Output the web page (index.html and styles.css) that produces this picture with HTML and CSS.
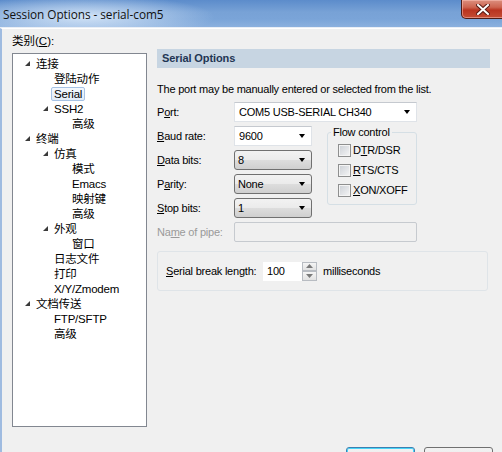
FILE: index.html
```html
<!DOCTYPE html>
<html>
<head>
<meta charset="utf-8">
<link rel="stylesheet" href="styles.css">
</head>
<body>
<div class="window">
  <div class="titlebar">
    <span class="title">Session Options - serial-com5</span>
    <div class="close">
      <svg width="14" height="11" viewBox="0 0 14 11"><path d="M2 1 L12 10 M12 1 L2 10" stroke="#5a1a14" stroke-width="4" stroke-linecap="square"/><path d="M2 1 L12 10 M12 1 L2 10" stroke="#ffffff" stroke-width="2" stroke-linecap="square"/></svg>
    </div>
  </div>
  <div class="client">
    <div class="columns">
      <div class="left">
        <div class="cat-label">类别(<u>C</u>):</div>
        <div class="tree">
          <div class="node l0"><span class="tog"><svg width="5" height="5" viewBox="0 0 5 5"><polygon points="5,0 5,5 0,5" fill="#3a3a3a"/></svg></span><span class="txt">连接</span></div>
          <div class="node l1"><span class="tog"></span><span class="txt">登陆动作</span></div>
          <div class="node l1"><span class="tog"></span><span class="txt sel">Serial</span></div>
          <div class="node l1"><span class="tog"><svg width="5" height="5" viewBox="0 0 5 5"><polygon points="5,0 5,5 0,5" fill="#3a3a3a"/></svg></span><span class="txt">SSH2</span></div>
          <div class="node l2"><span class="tog"></span><span class="txt">高级</span></div>
          <div class="node l0"><span class="tog"><svg width="5" height="5" viewBox="0 0 5 5"><polygon points="5,0 5,5 0,5" fill="#3a3a3a"/></svg></span><span class="txt">终端</span></div>
          <div class="node l1"><span class="tog"><svg width="5" height="5" viewBox="0 0 5 5"><polygon points="5,0 5,5 0,5" fill="#3a3a3a"/></svg></span><span class="txt">仿真</span></div>
          <div class="node l2"><span class="tog"></span><span class="txt">模式</span></div>
          <div class="node l2"><span class="tog"></span><span class="txt">Emacs</span></div>
          <div class="node l2"><span class="tog"></span><span class="txt">映射键</span></div>
          <div class="node l2"><span class="tog"></span><span class="txt">高级</span></div>
          <div class="node l1"><span class="tog"><svg width="5" height="5" viewBox="0 0 5 5"><polygon points="5,0 5,5 0,5" fill="#3a3a3a"/></svg></span><span class="txt">外观</span></div>
          <div class="node l2"><span class="tog"></span><span class="txt">窗口</span></div>
          <div class="node l1"><span class="tog"></span><span class="txt">日志文件</span></div>
          <div class="node l1"><span class="tog"></span><span class="txt">打印</span></div>
          <div class="node l1"><span class="tog"></span><span class="txt">X/Y/Zmodem</span></div>
          <div class="node l0"><span class="tog"><svg width="5" height="5" viewBox="0 0 5 5"><polygon points="5,0 5,5 0,5" fill="#3a3a3a"/></svg></span><span class="txt">文档传送</span></div>
          <div class="node l1"><span class="tog"></span><span class="txt">FTP/SFTP</span></div>
          <div class="node l1"><span class="tog"></span><span class="txt">高级</span></div>
        </div>
      </div>
      <div class="right">
        <div class="header">Serial Options</div>
        <p class="desc">The port may be manually entered or selected from the list.</p>
        <div class="form">
          <label class="lbl r1">P<u>o</u>rt:</label>
          <div class="combo edit wide r1"><span class="val">COM5 USB-SERIAL CH340</span><span class="arrow"></span></div>

          <label class="lbl r2"><u>B</u>aud rate:</label>
          <div class="combo edit r2"><span class="val">9600</span><span class="arrow"></span></div>

          <label class="lbl r3"><u>D</u>ata bits:</label>
          <div class="combo btn r3"><span class="val">8</span><span class="arrow"></span></div>

          <label class="lbl r4">P<u>a</u>rity:</label>
          <div class="combo btn r4"><span class="val">None</span><span class="arrow"></span></div>

          <label class="lbl r5"><u>S</u>top bits:</label>
          <div class="combo btn r5"><span class="val">1</span><span class="arrow"></span></div>

          <fieldset class="flow">
            <legend>Flow control</legend>
            <div class="chk"><span class="box"></span><span>D<u>T</u>R/DSR</span></div>
            <div class="chk"><span class="box"></span><span><u>R</u>TS/CTS</span></div>
            <div class="chk"><span class="box"></span><span><u>X</u>ON/XOFF</span></div>
          </fieldset>

          <label class="lbl dis r6">Na<u>m</u>e of pipe:</label>
          <div class="pipe wide r6"></div>
        </div>
        <div class="break-group">
          <span class="blbl"><u>S</u>erial break length:</span>
          <div class="spin">
            <span class="spin-val">100</span>
            <span class="spin-btns">
              <span class="sb"><svg width="7" height="4" viewBox="0 0 7 4"><polygon points="0,4 7,4 3.5,0" fill="#7a7a7a"/></svg></span>
              <span class="sb"><svg width="7" height="4" viewBox="0 0 7 4"><polygon points="0,0 7,0 3.5,4" fill="#7a7a7a"/></svg></span>
            </span>
          </div>
          <span class="ms">milliseconds</span>
        </div>
      </div>
    </div>
    <div class="footer">
      <div class="pbtn default"></div>
      <div class="pbtn"></div>
    </div>
  </div>
</div>
</body>
</html>
```
FILE: styles.css
```css
* { box-sizing: border-box; }
html, body { margin: 0; padding: 0; }
body {
  width: 502px;
  height: 452px;
  overflow: hidden;
  background: #f0f0f0;
  font-family: "Liberation Sans", "Noto Sans CJK SC", sans-serif;
  font-size: 11px;
  letter-spacing: -0.22px;
  color: #000;
}
.window { width: 502px; height: 452px; display: flex; flex-direction: column; }

.titlebar {
  height: 28px;
  flex: none;
  display: flex;
  align-items: flex-start;
  justify-content: space-between;
  background:
    radial-gradient(ellipse 130px 22px at 85px 17px, rgba(214,230,248,0.95), rgba(214,230,248,0) 100%),
    linear-gradient(180deg, #5c8ccb 0%, #78a2d6 45%, #7aa4d8 70%, #8bb0de 100%);
  border-bottom: 1px solid #e9eef5;
}
.title {
  font-family: "Open Sans", "Noto Sans", sans-serif;
  font-size: 11.8px;
  letter-spacing: -0.05px;
  line-height: 14px;
  margin: 7px 0 0 3px;
  color: #111;
}
.close {
  width: 43px;
  height: 19px;
  margin-right: -2px;
  display: flex;
  align-items: center;
  justify-content: center;
  border: 1px solid #4e1c16;
  border-top: none;
  border-bottom-left-radius: 5px;
  background: linear-gradient(180deg, #dc8f7f 0%, #cd6450 40%, #b93420 56%, #c44d35 100%);
  box-shadow: inset 0 0 0 1px rgba(255,200,190,0.5);
}

.client {
  flex: 1;
  border-left: 2px solid #9fbbe0;
  border-top: 1px solid #ffffff;
  padding: 0 0 0 10px;
  display: flex;
  flex-direction: column;
}
.columns { display: flex; gap: 10px; }

.left { width: 135px; flex: none; }
.cat-label {
  margin-top: 5px;
  line-height: 14px;
  font-size: 11.5px;
  letter-spacing: 0;
}
.tree {
  margin-top: 5px;
  height: 374px;
  background: #fff;
  border: 1px solid #828790;
  padding-top: 2px;
  font-size: 11px;
}
.node { height: 15px; display: flex; align-items: center; }
.node.l0 { padding-left: 11px; }
.node.l1 { padding-left: 29px; }
.node.l2 { padding-left: 47px; }
.tog { width: 12px; flex: none; display: flex; align-items: center; padding-left: 1px; }
.tog svg { display: block; }
.txt { line-height: 14px; font-size: 11.5px; white-space: nowrap; letter-spacing: -0.2px; }
.txt.sel {
  margin-left: -3px;
  padding: 0 2px;
  border: 1px solid #a6c2e4;
  border-radius: 2px;
  background: linear-gradient(180deg, #f4f8fd, #e2ecf8);
  line-height: 12px;
}

.right { width: 333px; flex: none; }
.header {
  margin-top: 20px;
  height: 19px;
  background: #c7d5e2;
  padding-left: 5px;
  font-weight: bold;
  line-height: 19px;
  color: #1f3654;
  letter-spacing: -0.1px;
}
.desc { margin: 14px 0 0; line-height: 14px; }

.form {
  margin-top: 6px;
  display: grid;
  grid-template-columns: 77px 78px 15px 90px;
  grid-auto-rows: 20px;
  row-gap: 4px;
  align-items: center;
}
.lbl { grid-column: 1; }
.lbl.dis { color: #9a9a9a; }
.r1 { grid-row: 1; } .r2 { grid-row: 2; } .r3 { grid-row: 3; }
.r4 { grid-row: 4; } .r5 { grid-row: 5; } .r6 { grid-row: 6; }
.combo, .pipe { grid-column: 2; height: 20px; }
.wide { grid-column: 2 / span 3; }

.combo {
  display: flex;
  align-items: center;
  justify-content: space-between;
  padding: 0 6px 0 4px;
}
.combo.edit {
  background: #fff;
  border: 1px solid #dfe3e8;
  border-top-color: #c5c9cf;
}
.combo.btn {
  border: 1px solid #707070;
  border-radius: 3px;
  background: linear-gradient(180deg, #f2f2f2 0%, #ebebeb 48%, #dddddd 52%, #cfcfcf 100%);
  padding-left: 3px;
}
.arrow {
  width: 0; height: 0;
  border-left: 3.5px solid transparent;
  border-right: 3.5px solid transparent;
  border-top: 4px solid #000;
}
.pipe {
  background: #f0f0f0;
  border: 1px solid #c6cacf;
  border-radius: 2px;
}

.flow {
  grid-column: 4;
  grid-row: 2 / span 4;
  align-self: start;
  margin: 0;
  padding: 1px 0 4px 0;
  border: 1px solid #d5dfe5;
  border-radius: 3px;
  min-width: 0;
}
.flow legend {
  padding: 0 2px;
  margin-left: 3px;
  line-height: 13px;
}
.chk { height: 20px; display: flex; align-items: center; gap: 2px; padding-left: 10px; }
.box {
  width: 13px; height: 13px;
  border: 1px solid #8e8f8f;
  background: linear-gradient(135deg, #cbcfd5 0%, #e4e6e9 60%, #f6f6f6 100%);
  box-shadow: inset 0 0 0 1px #f4f4f4;
}

.break-group {
  margin-top: 9px;
  width: 331px;
  height: 40px;
  border: 1px solid #dfe4e8;
  border-radius: 3px;
  display: flex;
  align-items: center;
  padding-left: 8px;
}
.blbl { width: 97px; flex: none; }
.spin { display: flex; height: 19px; }
.spin-val {
  width: 39px;
  background: #fff;
  padding-left: 4px;
  line-height: 19px;
}
.spin-btns { width: 15px; display: flex; flex-direction: column; }
.sb {
  flex: 1;
  border: 1px solid #b8bcc2;
  background: linear-gradient(180deg, #f5f5f5, #e2e2e2);
  display: flex; align-items: center; justify-content: center;
}
.sb svg { display: block; }
.ms { margin-left: 6px; }

.footer {
  margin-top: 20px;
  display: flex;
  justify-content: flex-end;
  gap: 9px;
  padding-right: 9px;
}
.pbtn {
  width: 69px;
  height: 23px;
  border: 1px solid #707070;
  border-radius: 3px;
  background: linear-gradient(180deg, #f2f2f2 0%, #ebebeb 48%, #dddddd 52%, #cfcfcf 100%);
}
.pbtn.default {
  border-color: #3c7fb1;
  box-shadow: inset 0 0 0 1px #48d5f8;
}
```
